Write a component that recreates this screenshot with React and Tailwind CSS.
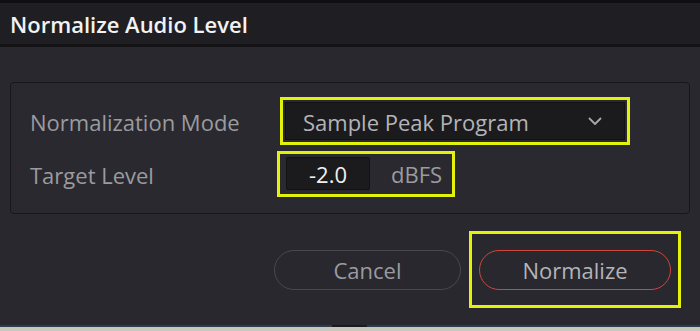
import React from "react";

const font = { fontFamily: '"Open Sans", "Noto Sans", sans-serif' };

export default function App() {
  return (
    <div
      className="w-[700px] h-[331px] flex flex-col overflow-hidden bg-[#28282e]"
      style={font}
    >
      <div className="h-[3px] bg-[#101012]" />
      <div className="h-[41px] bg-[#1f1f23] flex items-center pl-[10px]">
        <span className="text-[22px] font-semibold text-[#f2f2f2] leading-none">
          Normalize Audio Level
        </span>
      </div>
      <div className="h-[3px] bg-[#131315]" />
      <div className="flex-1 flex flex-col px-[10px] pt-[35px]">
        <div className="h-[132px] border border-[#17171a] rounded-[4px] bg-[#29292f] pl-[19px] pt-[14px] flex flex-col gap-[6px]">
          <div className="flex items-center h-[48px]">
            <div className="w-[250px] text-[22px] leading-none pt-[2px] text-[#9b9b9f]">Normalization Mode</div>
            <div className="w-[350px] h-[48px] border-[3px] border-[#e2f20c] p-[2px]">
              <div className="h-full bg-[#1b1b1e] border border-[#121214] flex items-center pl-[17px] pr-[22px]">
                <span className="flex-1 text-[22px] leading-none pt-[1px] text-[#b4b4b8]">Sample Peak Program</span>
                <svg width="14" height="9" viewBox="0 0 14 9" fill="none">
                  <path d="M1.5 1.5 L7 7 L12.5 1.5" stroke="#a8a8ac" strokeWidth="1.8" strokeLinecap="round" strokeLinejoin="round" />
                </svg>
              </div>
            </div>
          </div>
          <div className="flex items-center h-[46px]">
            <div className="w-[247px] text-[22px] leading-none pt-[2px] text-[#9b9b9f]">Target Level</div>
            <div className="w-[178px] h-[46px] border-[3px] border-[#e2f20c] pl-[6px] pt-[3px] pb-[4px] flex items-stretch">
              <div className="w-[84px] bg-[#1b1b1e] border border-[#121214] rounded-[2px] flex items-center justify-center text-[22px] leading-none text-[#f0f0f0]">
                -2.0
              </div>
              <div className="flex-1 flex items-center pl-[21px] text-[22px] leading-none text-[#9b9b9f]">dBFS</div>
            </div>
          </div>
        </div>
        <div className="flex justify-end items-center gap-[8px] mt-[17px] pr-[9px]">
          <div className="w-[187px] h-[40px] rounded-full border border-[#48484e] flex items-center justify-center text-[22px] leading-none text-[#9b9b9f]">
            Cancel
          </div>
          <div className="w-[212px] h-[77px] border-[3px] border-[#e2f20c] pl-[7px] pr-[7px] pt-[16px]">
            <div className="h-[40px] rounded-full border-[1.5px] border-[#d0463a] flex items-center justify-center text-[22px] leading-none text-[#b4b4b8]">
              Normalize
            </div>
          </div>
        </div>
      </div>
      <div className="h-[2px] flex">
        <div className="w-[332px] bg-[#2c3d50]" />
        <div className="w-[35px] bg-[#1c1c20]" />
        <div className="flex-1 bg-[#2c3d50]" />
      </div>
      <div className="h-[4px] bg-[#c8c8be]" />
    </div>
  );
}
